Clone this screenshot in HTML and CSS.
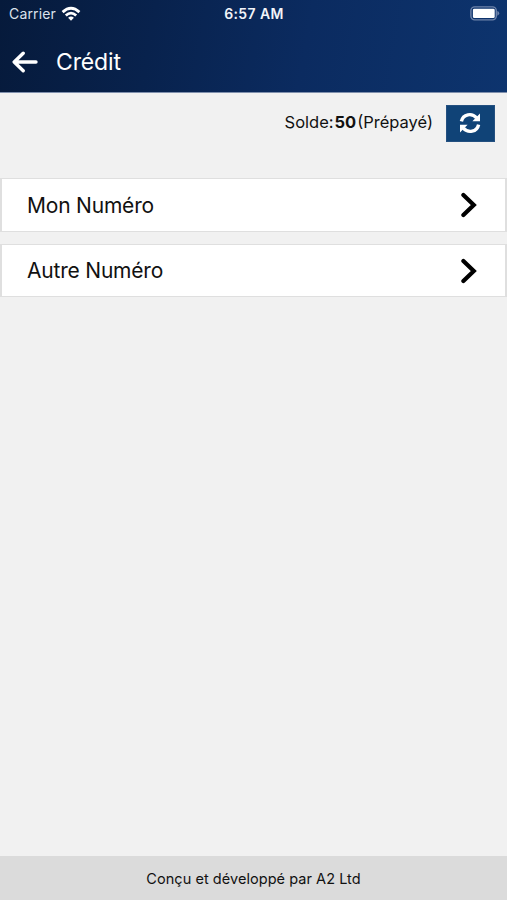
FILE: index.html
```html
<!DOCTYPE html>
<html lang="fr">
<head>
<meta charset="utf-8">
<title>Crédit</title>
<link rel="stylesheet" href="styles.css">
</head>
<body>
<header class="header">
  <div class="status">
    <div class="carrier"><span>Carrier</span>
      <svg class="wifi" width="20" height="16" viewBox="0 0 20 16" fill="none" stroke="#fff" stroke-width="2.8"><path d="M1.6 6.1Q10 -1.7 18.4 6.1M4.8 9.5Q10 4.8 15.2 9.5"/><path d="M7.1 11.8Q10 9.1 12.9 11.8L10 14.7Z" fill="#fff" stroke="none"/></svg>
    </div>
    <time class="time">6:57 AM</time>
    <svg class="battery" width="30" height="15" viewBox="0 0 30 15"><rect x=".9" y=".9" width="25.4" height="13" rx="3.8" fill="none" stroke="#6f84aa" stroke-width="1.4"/><rect x="2.9" y="2.7" width="21.8" height="9.4" rx="1.4" fill="#fff"/><path d="M27.3 5Q29.2 5.5 29.2 7.3T27.3 9.7Z" fill="#6f84aa"/></svg>
  </div>
  <div class="navbar">
    <svg class="back" width="26" height="22" viewBox="0 0 26 22" fill="none" stroke="#fff" stroke-width="3.4" stroke-linecap="round" stroke-linejoin="round"><path d="M24 11H2.5M11.2 2.2L2.2 11L11.2 19.8"/></svg>
    <h1 class="title">Crédit</h1>
  </div>
</header>
<main class="content">
  <div class="balance">
    <div class="summary"><span class="label">Solde:</span><strong class="amount">50</strong><span class="plan">(Prépayé)</span></div>
    <button class="refresh" aria-label="Actualiser">
      <svg width="22" height="22" viewBox="0 0 22 22" fill="none" stroke="#fff" stroke-width="3.4"><path d="M2.4 9.4C4 1.8 13 .6 17.6 5.8M19.6 12.6C18 20.2 9 21.4 4.4 16.2"/><path d="M21 1.6V9.2H13.4ZM1 20.4V12.8H8.6Z" fill="#fff" stroke="none"/></svg>
    </button>
  </div>
  <nav class="list">
    <a class="row"><span>Mon Numéro</span><svg width="16" height="26" viewBox="0 0 16 26" fill="none" stroke="#000" stroke-width="4.2" stroke-linecap="round"><path d="M2.4 2.9L12.8 13L2.4 23.1"/></svg></a>
    <a class="row"><span>Autre Numéro</span><svg width="16" height="26" viewBox="0 0 16 26" fill="none" stroke="#000" stroke-width="4.2" stroke-linecap="round"><path d="M2.4 2.9L12.8 13L2.4 23.1"/></svg></a>
  </nav>
</main>
<footer class="footer"><span>Conçu et développé par A2 Ltd</span></footer>
</body>
</html>
```
FILE: styles.css
```css
* { box-sizing: border-box; }
body {
  margin: 0;
  height: 900px;
  display: flex;
  flex-direction: column;
  background: #f1f1f1;
  color: #111;
  font-family: Inter, "Liberation Sans", sans-serif;
}
.header {
  height: 93px;
  color: #fff;
  background: linear-gradient(100deg, #061a3b 0%, #08224d 30%, #0b2b60 60%, #0d346e 100%);
  border-bottom: 1px solid #8090ad;
}
.status {
  height: 28px;
  padding: 0 7px 0 9px;
  display: grid;
  grid-template-columns: 1fr auto 1fr;
  align-items: center;
}
.carrier { display: flex; align-items: center; gap: 5px; font-size: 14px; letter-spacing: .15px; color: #dce2ec; }
.carrier span { margin-top: -2px; }
.wifi { margin-top: -1px; }
.time { margin: -2px 1px 0 0; font-size: 14px; font-weight: 600; letter-spacing: .4px; color: #f1f4f9; }
.battery { justify-self: end; margin-top: -1px; }
.navbar { height: 64px; padding: 4px 12px 0; display: flex; align-items: center; gap: 18px; }
.title { margin: 0; font-size: 23px; font-weight: 400; letter-spacing: -.15px; }
.content { flex: 1; }
.balance {
  height: 60px;
  padding: 0 12px 0 0;
  display: flex;
  align-items: center;
  justify-content: flex-end;
}
.summary { display: flex; align-items: center; margin-top: -2px; font-size: 16.5px; }
.label { letter-spacing: 0; }
.amount { margin: 0 1px 0 1px; font-weight: 700; }
.plan { letter-spacing: 0; }
.refresh {
  width: 49px;
  height: 37px;
  margin-left: 13px;
  padding: 0 1px 0 0;
  border: 1px solid #245080;
  background: #104377;
  display: flex;
  align-items: center;
  justify-content: center;
}
.list { margin-top: 25px; display: flex; flex-direction: column; gap: 12px; }
.row {
  height: 54px;
  padding: 0 28px 0 25px;
  display: flex;
  align-items: center;
  justify-content: space-between;
  background: #fff;
  border: 1px solid #dfdfdf;
  border-width: 1px 2px 1px 2px;
  font-size: 21px;
  letter-spacing: -.2px;
}
.row + .row { height: 53px; }
.footer {
  height: 44px;
  display: flex;
  align-items: center;
  justify-content: center;
  background: #dbdbdb;
  font-size: 14.5px;
  letter-spacing: .05px;
}
```
